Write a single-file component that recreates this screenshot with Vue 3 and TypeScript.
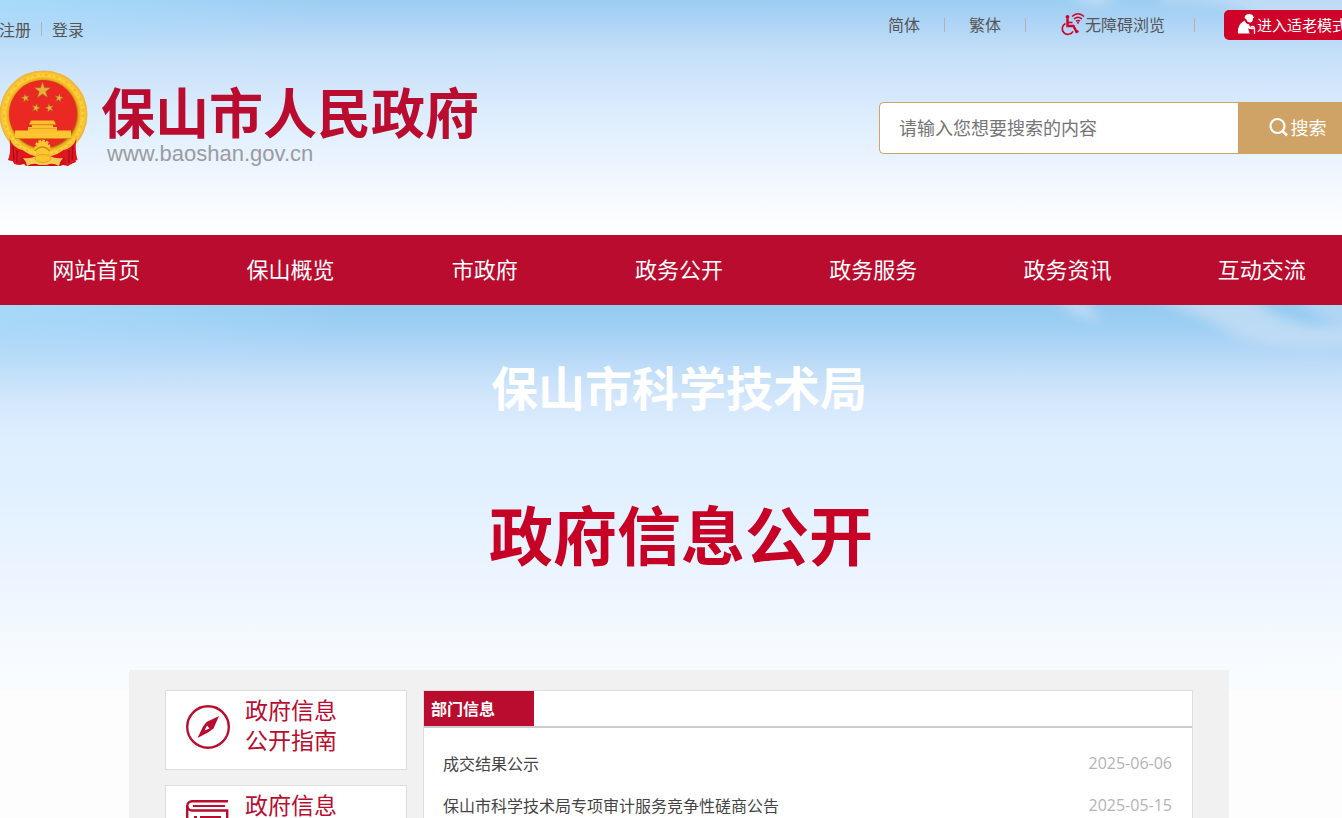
<script setup lang="ts">
interface Notice {
  title: string
  date: string
}

const navItems: string[] = ['网站首页', '保山概览', '市政府', '政务公开', '政务服务', '政务资讯', '互动交流']

const notices: Notice[] = [
  { title: '成交结果公示', date: '2025-06-06' },
  { title: '保山市科学技术局专项审计服务竞争性磋商公告', date: '2025-05-15' },
]

/* Points of a five-pointed star centred on (cx, cy). */
function star(cx: number, cy: number, r: number, turn = 0): string {
  return Array.from({ length: 10 }, (_, i) => {
    const radius = i % 2 ? r * 0.4 : r
    const a = ((i * 36 - 90 + turn) * Math.PI) / 180
    return `${(cx + radius * Math.cos(a)).toFixed(2)},${(cy + radius * Math.sin(a)).toFixed(2)}`
  }).join(' ')
}

const stars: string[] = [
  star(43.5, 20.5, 8.5),
  star(26.5, 28, 4.4, -12),
  star(60, 28, 4.4, 12),
  star(37, 38, 4.4, 14),
  star(50.5, 38, 4.4, -14),
]
</script>

<template>
  <div class="page">
    <div class="canvas">
      <header class="header">
        <svg class="clouds" viewBox="0 0 480 80" aria-hidden="true">
          <defs>
            <filter id="soft-top" x="-20%" y="-50%" width="140%" height="200%"><feGaussianBlur stdDeviation="6" /></filter>
          </defs>
          <g filter="url(#soft-top)" fill="#d6e4f6">
            <path d="M200-10h55l-8 13q-20 5-30-3z" opacity=".6" />
            <path d="M300-10h190v40q-60 0-100-16t-90-12z" opacity=".6" />
          </g>
        </svg>
        <div class="inner topbar">
          <nav class="account" aria-label="账户">
            <a href="#">注册</a><span class="sep"></span><a href="#">登录</a>
          </nav>
          <div class="tools">
            <a href="#">简体</a>
            <span class="sep sep-a"></span>
            <a href="#">繁体</a>
            <span class="sep sep-b"></span>
            <a href="#" class="access">
              <svg width="25" height="24" viewBox="0 0 25 24" fill="none" stroke="#cf0229" aria-hidden="true">
                <circle cx="7.500" cy="5" r="1.900" fill="#cf0229" stroke="none" />
                <path d="M7.500 7v7h6l3 6 2-1" stroke-width="2.400" />
                <path d="M7.500 10.500h5" stroke-width="1.600" />
                <path d="M5.500 11.500a5.700 5.700 0 1 0 7.500 7.800" stroke-width="1.600" />
                <path d="M12 4.500q6-5.500 12 0M14 7q4-3.500 8 0M16 9.200q2-1.500 4 0" stroke-width="1.500" />
                <circle cx="18" cy="10.700" r="1" fill="#cf0229" stroke="none" />
              </svg>无障碍浏览</a>
            <span class="sep sep-c"></span>
            <button type="button" class="elder">
              <svg width="19" height="22" viewBox="0 0 19 22" fill="#fff" aria-hidden="true">
                <path d="M7.500 5Q8 1 12 1q4 0 4.500 3l1 .6-1.700.9q.4 3.500-2.500 4Q10 9.500 9.500 6.500z" />
                <path d="M7.500 7.500Q9 11 12 11.300l1 3 3.500.2q1 1.300-.5 1.700l-4-.2-1-1.200 1.500 5.700H1Q-.2 12 7.500 7.500z" />
                <path d="M13.500 14q4-1.500 4 1.500V21" fill="none" stroke="#fff" stroke-width="1.300" />
              </svg>进入适老模式</button>
          </div>
        </div>
        <div class="inner masthead">
          <a class="brand" href="#">
            <svg class="emblem" width="90" height="97" viewBox="0 0 90 97" aria-hidden="true">
              <defs>
                <radialGradient id="gold" cx="50%" cy="50%" r="50%">
                  <stop offset=".76" stop-color="#a96d12" />
                  <stop offset=".8" stop-color="#eda91c" />
                  <stop offset=".88" stop-color="#ffd53a" />
                  <stop offset=".95" stop-color="#f8c233" />
                  <stop offset="1" stop-color="#e8b03a" />
                </radialGradient>
              </defs>
              <path d="M10 68Q13 82 9 90l5 1 2 3 5 1 4-1 2 2h34l3-1 5 1 3-2 5-2q-4-10-1-24z" fill="#cf121c" />
              <circle cx="44.500" cy="44.500" r="44" fill="url(#gold)" />
              <circle cx="44.500" cy="44.500" r="39.500" fill="none" stroke="#e9a522" stroke-width="2" stroke-dasharray="3 4 1 3" opacity=".55" />
              <circle cx="44" cy="44" r="34" fill="#ea2a22" />
              <polygon v-for="points in stars" :key="points" :points="points" fill="#e6b23c" stroke="#a8661a" stroke-width=".5" />
              <path d="M32 50.500h23l2 4H30zM33 55h21v2H33zM29 57h29v7H29z" fill="#fbc02d" />
              <path d="M31 54.800h25M30 58.500h27" stroke="#d99020" stroke-width=".6" />
              <path d="M16 60.500h14v2h28v-2h14v8H16z" fill="#fdc534" />
              <path d="M16 68.500h56" stroke="#cf8915" stroke-width=".8" />
              <path d="M10.500 68q3 10 13 12l6 4-2 5-5-2-2 8-5-1-2-3-4-1q3-11 1-22zM77.500 68q-3 10-13 12l-6 4 2 5 5-2 2 8 5-1 2-3 4-1q-3-11-1-22z" fill="#e01620" />
              <path d="M14 76l1 14M18 80v13M74 76l-1 14M70 80v13" stroke="#a0101a" stroke-width="1.200" />
              <path d="M25 82q10 5 19 5t19-5l-4 8H29z" fill="#e01620" />
              <circle cx="43.500" cy="77.500" r="6.500" fill="#fbc632" stroke="#fbc632" stroke-width="3" stroke-dasharray="2.500 1.200" />
              <path d="M36 81q7-8 15 0" fill="none" stroke="#d08a13" stroke-width="1.300" />
              <path d="M24 88q8 1 13-2h14q5 3 13 2-3 3-4 8-7-4-12-1h-8q-5-3-12 1-1-5-4-8z" fill="#f3cb4e" />
              <ellipse cx="44" cy="88.500" rx="8" ry="4" fill="#ffc42c" stroke="#d8961a" stroke-width=".7" />
            </svg>
            <span class="names">
              <strong>保山市人民政府</strong>
              <small>www.baoshan.gov.cn</small>
            </span>
          </a>
          <form class="search" @submit.prevent>
            <input type="text" placeholder="请输入您想要搜索的内容" aria-label="请输入您想要搜索的内容" />
            <button type="submit">
              <svg width="20" height="20" viewBox="0 0 20 20" fill="none" stroke="#fff" stroke-width="2.200" aria-hidden="true">
                <circle cx="8.500" cy="9" r="7" />
                <path d="M13.500 14l4.500 4.500" stroke-width="2.600" />
              </svg>搜索</button>
          </form>
        </div>
      </header>

      <nav class="mainnav" aria-label="主导航">
        <a v-for="item in navItems" :key="item" href="#">{{ item }}</a>
      </nav>

      <main class="hero">
        <svg class="clouds" viewBox="0 0 480 80" aria-hidden="true">
          <defs>
            <filter id="soft-hero" x="-20%" y="-50%" width="140%" height="200%"><feGaussianBlur stdDeviation="6" /></filter>
          </defs>
          <g filter="url(#soft-hero)" fill="#cbdff5">
            <path d="M190-8h30l20 24q-24 0-50-24z" opacity=".7" />
            <path d="M280-10h110q15 22 60 32l40-2v20q-60 6-110-6-30-20-100-44z" opacity=".7" />
            <path d="M430-10h60v30q-30-2-60-30z" opacity=".5" />
          </g>
        </svg>
        <h1>保山市科学技术局</h1>
        <h2>政府信息公开</h2>

        <div class="content">
          <aside class="side">
            <a class="card" href="#">
              <svg width="44" height="44" viewBox="0 0 44 44" aria-hidden="true">
                <circle cx="22" cy="22" r="20.800" fill="none" stroke="#b90c2f" stroke-width="2.400" />
                <path fill-rule="evenodd" d="M33 11L27.500 23.500 22 27.500 11.500 33 17 21.500 20.500 17zM21 20.500l-2.500 5 5-2z" fill="#b90c2f" />
              </svg>
              <span>政府信息<br />公开指南</span>
            </a>
            <a class="card" href="#">
              <svg width="44" height="44" viewBox="0 0 44 44" fill="none" stroke="#b90c2f" aria-hidden="true">
                <path d="M42 1.200H6.500A5 5 0 0 0 1.200 6v35h40V10.500H6a4.500 4.500 0 0 1-4.500-4.500" stroke-width="2.400" />
                <path d="M7 6h32" stroke-width="2" />
                <path d="M8 17h3M14 17h21M8 23h3M14 23h21" stroke-width="2" />
              </svg>
              <span>政府信息</span>
            </a>
          </aside>
          <section class="panel">
            <h3><span>部门信息</span></h3>
            <ul>
              <li v-for="notice in notices" :key="notice.title">
                <a href="#">{{ notice.title }}</a>
                <time :datetime="notice.date">{{ notice.date }}</time>
              </li>
            </ul>
          </section>
        </div>
      </main>
    </div>
  </div>
</template>

<style>
body {
  margin: 0;
  background: #fdfdfd;
}
</style>

<style scoped>
.page {
  height: 100vh;
  overflow: hidden;
  font-family: "Noto Sans CJK SC", sans-serif;
  font-size: 16px;
  color: #555;
}
.canvas {
  margin-right: -16px;
}
a {
  color: inherit;
  text-decoration: none;
}
button,
input {
  font-family: inherit;
  margin: 0;
  box-sizing: border-box;
}
svg {
  display: block;
  flex: none;
}
.header,
.hero {
  position: relative;
}
.header {
  height: 235px;
  background:
    radial-gradient(ellipse 320px 70px at 0 0, rgba(176, 226, 255, 0.6), rgba(176, 226, 255, 0)),
    linear-gradient(#9bcef2 0, #afd4f6 24px, #c2dff8 50px, #d0e5fb 80px, #deeefd 120px, #e9f3fe 155px, #f6faff 195px, #fff 235px);
}
.clouds {
  position: absolute;
  top: 0;
  right: 16px;
  width: 480px;
  height: 80px;
}
.inner {
  position: relative;
  display: flex;
  justify-content: space-between;
  margin: 0 -1px;
}
.topbar {
  height: 50px;
  line-height: 30px;
}
.account,
.tools {
  display: flex;
  align-items: center;
}
.account {
  gap: 10px;
  height: 58px;
}
.tools {
  height: 50px;
}
.tools a {
  padding-bottom: 2px;
}
.sep {
  width: 1px;
  height: 14px;
  background: #b8aeb4;
}
.sep-a {
  margin: 0 24px;
}
.sep-b {
  margin: 0 34px 0 24px;
}
.sep-c {
  margin: 0 29px;
}
.access {
  display: flex;
  align-items: center;
}
.elder {
  display: flex;
  align-items: center;
  gap: 1px;
  width: 135px;
  height: 30px;
  padding: 0 0 2px 13px;
  border: 0;
  border-radius: 5px;
  background: #cf0229;
  color: #fff;
  font-size: 15px;
  white-space: nowrap;
}
.masthead {
  align-items: flex-start;
}
.brand {
  display: flex;
  gap: 12px;
  padding-top: 20px;
}
.names {
  display: flex;
  flex-direction: column;
  padding-top: 11px;
}
.names strong {
  font-size: 54px;
  line-height: 60px;
  font-weight: 700;
  color: #b90c2f;
}
.names small {
  padding-left: 6px;
  font: 22px/26px "Liberation Sans", Arial, sans-serif;
  color: #999ca0;
}
.search {
  display: flex;
  width: 480px;
  margin-top: 52px;
}
.search input {
  flex: 1;
  min-width: 0;
  height: 52px;
  padding: 0 19px 2px;
  border: 1px solid #cfa365;
  border-right: 0;
  border-radius: 5px 0 0 5px;
  background: #fff;
  font-size: 18px;
  color: #555;
}
.search input::placeholder {
  color: #757575;
  opacity: 1;
}
.search button {
  display: flex;
  align-items: center;
  justify-content: center;
  gap: 2px;
  width: 121px;
  height: 52px;
  padding: 0 2px 2px 0;
  border: 0;
  background: #cfa365;
  color: #fff;
  font-size: 18px;
}
.mainnav {
  display: grid;
  grid-template-columns: repeat(7, 1fr);
  margin: 0 -1px;
  padding-bottom: 4px;
  background: #b90c2f;
  color: #fff;
  font-size: 22px;
  line-height: 66px;
  text-align: center;
}
.hero {
  padding-top: 48px;
  text-align: center;
  background:
    radial-gradient(ellipse 360px 90px at 0 0, rgba(184, 228, 255, 0.55), rgba(184, 228, 255, 0)),
    linear-gradient(#95caf0 0, #9ccff3 20px, #b0d5f6 42px, #c4e0f9 70px, #d4e7fc 96px, #deefff 135px, #e3f1ff 200px, #edf5ff 280px, #f7fbff 350px, #f8fcff 385px) 0 0 / 100% 385px no-repeat;
}
h1,
h2,
h3,
ul {
  margin: 0;
  padding: 0;
}
h1,
h2 {
  position: relative;
}
h1 {
  font-size: 47px;
  line-height: 66px;
  color: #fff;
}
h2 {
  padding: 64px 0 89px 4px;
  font-size: 64px;
  line-height: 98px;
  color: #c70025;
}
.content {
  display: flex;
  gap: 16px;
  box-sizing: border-box;
  max-width: 1100px;
  margin: 0 auto;
  padding: 20px 36px;
  background: #f1f1f1;
  text-align: left;
}
.side {
  display: flex;
  flex-direction: column;
  gap: 15px;
  width: 242px;
}
.card {
  display: flex;
  align-items: flex-start;
  gap: 15px;
  box-sizing: border-box;
  height: 80px;
  padding: 3px 20px 0;
  border: 1px solid #ddd;
  background: #fff;
  color: #b90c2f;
  font-size: 23px;
  line-height: 30px;
}
.card svg {
  margin-top: 11px;
}
.panel {
  flex: 1;
  border: 1px solid #ddd;
  background: #fff;
}
.panel h3 {
  border-bottom: 2px solid #ccc;
  font-size: 16px;
  line-height: 35px;
  color: #fff;
}
.panel h3 span {
  display: block;
  box-sizing: border-box;
  width: 110px;
  padding-left: 7px;
  background: #b90c2f;
}
.panel ul {
  padding: 14px 20px 14px 19px;
  list-style: none;
}
.panel li {
  display: flex;
  justify-content: space-between;
  line-height: 42px;
  color: #444;
}
.panel time {
  font-family: "Open Sans", "Noto Sans", sans-serif;
  color: #b4b4b4;
}
</style>
